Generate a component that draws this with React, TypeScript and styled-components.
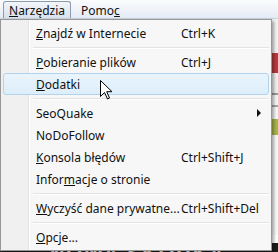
import styled, { createGlobalStyle } from "styled-components";

const GlobalStyle = createGlobalStyle`
  html, body {
    margin: 0;
    padding: 0;
  }
  body {
    font-family: "Segoe UI", "Noto Sans", "Liberation Sans", sans-serif;
    background: #ffffff;
  }
`;

const Page = styled.div`
  position: relative;
  width: 278px;
  height: 252px;
  overflow: hidden;
  display: flex;
  flex-direction: column;
  background: #ffffff;
`;

const MenuBar = styled.div`
  height: 19px;
  display: flex;
  align-items: stretch;
  gap: 4px;
  padding: 1px 0 0 3px;
  box-sizing: border-box;
  background: linear-gradient(#fbfcfe, #e4ebf4);
  border-bottom: 1px solid #c9d3df;
`;

const BarItem = styled.div<{ $open?: boolean }>`
  display: flex;
  align-items: center;
  padding: 0 5px;
  font-size: 12px;
  color: #111;
  border: 1px solid ${(p) => (p.$open ? "#8d9bb0" : "transparent")};
  border-bottom: none;
  border-radius: 3px 3px 0 0;
  background: ${(p) => (p.$open ? "linear-gradient(#f3f6fa, #d9e1ec)" : "none")};
`;

const Content = styled.div`
  flex: 1;
  display: flex;
  justify-content: flex-end;
`;

const SideStrip = styled.div`
  width: 6px;
  display: flex;
  flex-direction: column;
`;

const StripBlock = styled.div<{ $h: number; $c: string }>`
  height: ${(p) => p.$h}px;
  background: ${(p) => p.$c};
`;

const Banner = styled.div`
  height: 9px;
  background: #1c1c1c;
  color: #f4f4f4;
  font-family: "Liberation Sans", sans-serif;
  font-weight: bold;
  font-size: 20px;
  line-height: 20px;
  padding-left: 50px;
  white-space: nowrap;
  overflow: hidden;
  letter-spacing: 2px;
`;

const Dropdown = styled.div`
  position: absolute;
  top: 19px;
  left: 0;
  width: 272px;
  box-sizing: border-box;
  padding: 2px;
  border: 1px solid #979797;
  background: linear-gradient(90deg, #f0f0f0 0, #f0f0f0 27px, #e2e3e3 27px, #e2e3e3 28px, #ffffff 28px, #ffffff 29px, #f7f7f7 29px);
  box-shadow: 2px 2px 3px rgba(0, 0, 0, 0.35);
  display: flex;
  flex-direction: column;
`;

const Item = styled.div<{ $active?: boolean }>`
  height: 22px;
  display: flex;
  align-items: center;
  box-sizing: border-box;
  padding-left: 32px;
  font-size: 12px;
  color: #111;
  border: 1px solid ${(p) => (p.$active ? "#b2d3ee" : "transparent")};
  border-radius: 3px;
  background: ${(p) => (p.$active ? "linear-gradient(#eaf4fc, #dceefa)" : "none")};
`;

const Label = styled.span`
  width: 145px;
  white-space: nowrap;
`;

const Shortcut = styled.span`
  white-space: nowrap;
`;

const Arrow = styled.span`
  margin-left: auto;
  margin-right: 7px;
  width: 0;
  height: 0;
  border-top: 4px solid transparent;
  border-bottom: 4px solid transparent;
  border-left: 4px solid #111;
`;

const Separator = styled.div`
  height: 7px;
  display: flex;
  align-items: center;
  padding-left: 30px;
  &::after {
    content: "";
    flex: 1;
    height: 1px;
    background: #e2e3e3;
    border-bottom: 1px solid #ffffff;
  }
`;

const Cursor = styled.svg`
  position: absolute;
  left: 100px;
  top: 80px;
`;

type Entry =
  | { sep: true }
  | { sep?: false; label: string; key?: number; shortcut?: string; sub?: boolean; active?: boolean };

const entries: Entry[] = [
  { label: "Znajdź w Internecie", key: 0, shortcut: "Ctrl+K" },
  { sep: true },
  { label: "Pobieranie plików", key: 0, shortcut: "Ctrl+J" },
  { label: "Dodatki", key: 0, active: true },
  { sep: true },
  { label: "SeoQuake", sub: true },
  { label: "NoDoFollow" },
  { label: "Konsola błędów", key: 0, shortcut: "Ctrl+Shift+J" },
  { label: "Informacje o stronie", key: 5 },
  { sep: true },
  { label: "Wyczyść dane prywatne...", key: 0, shortcut: "Ctrl+Shift+Del" },
  { sep: true },
  { label: "Opcje...", key: 0 },
];

function Access({ text, at }: { text: string; at?: number }) {
  if (at === undefined) return <>{text}</>;
  return (
    <>
      {text.slice(0, at)}
      <u>{text[at]}</u>
      {text.slice(at + 1)}
    </>
  );
}

export default function App() {
  return (
    <>
      <GlobalStyle />
      <Page>
        <MenuBar>
          <BarItem $open>
            <Access text="Narzędzia" at={0} />
          </BarItem>
          <BarItem>
            <Access text="Pomoc" at={4} />
          </BarItem>
        </MenuBar>
        <Content>
          <SideStrip>
            <StripBlock $h={34} $c="#f2f2f2" />
            <StripBlock $h={20} $c="#b9393a" />
            <StripBlock $h={20} $c="#eeeeee" />
            <StripBlock $h={2} $c="#9a9a9a" />
            <StripBlock $h={10} $c="#f4f4f4" />
            <StripBlock $h={2} $c="#a5a5a5" />
            <StripBlock $h={12} $c="#f6f6f6" />
            <StripBlock $h={16} $c="#a7b548" />
            <StripBlock $h={100} $c="#f8f8f8" />
          </SideStrip>
        </Content>
        <Banner>NOWA SKÓRKA</Banner>
        <Dropdown>
          {entries.map((e, i) =>
            e.sep ? (
              <Separator key={i} />
            ) : (
              <Item key={i} $active={e.active}>
                <Label>
                  <Access text={e.label} at={e.key} />
                </Label>
                {e.shortcut && <Shortcut>{e.shortcut}</Shortcut>}
                {e.sub && <Arrow />}
              </Item>
            )
          )}
        </Dropdown>
        <Cursor width="13" height="20" viewBox="0 0 13 20">
          <path d="M0.5 0.5 L0.5 16.5 L4.5 12.5 L7.5 19 L9.5 18 L6.7 11.7 L12 11.7 Z" fill="#ffffff" stroke="#000000" strokeWidth="1" strokeLinejoin="miter" />
        </Cursor>
      </Page>
    </>
  );
}
